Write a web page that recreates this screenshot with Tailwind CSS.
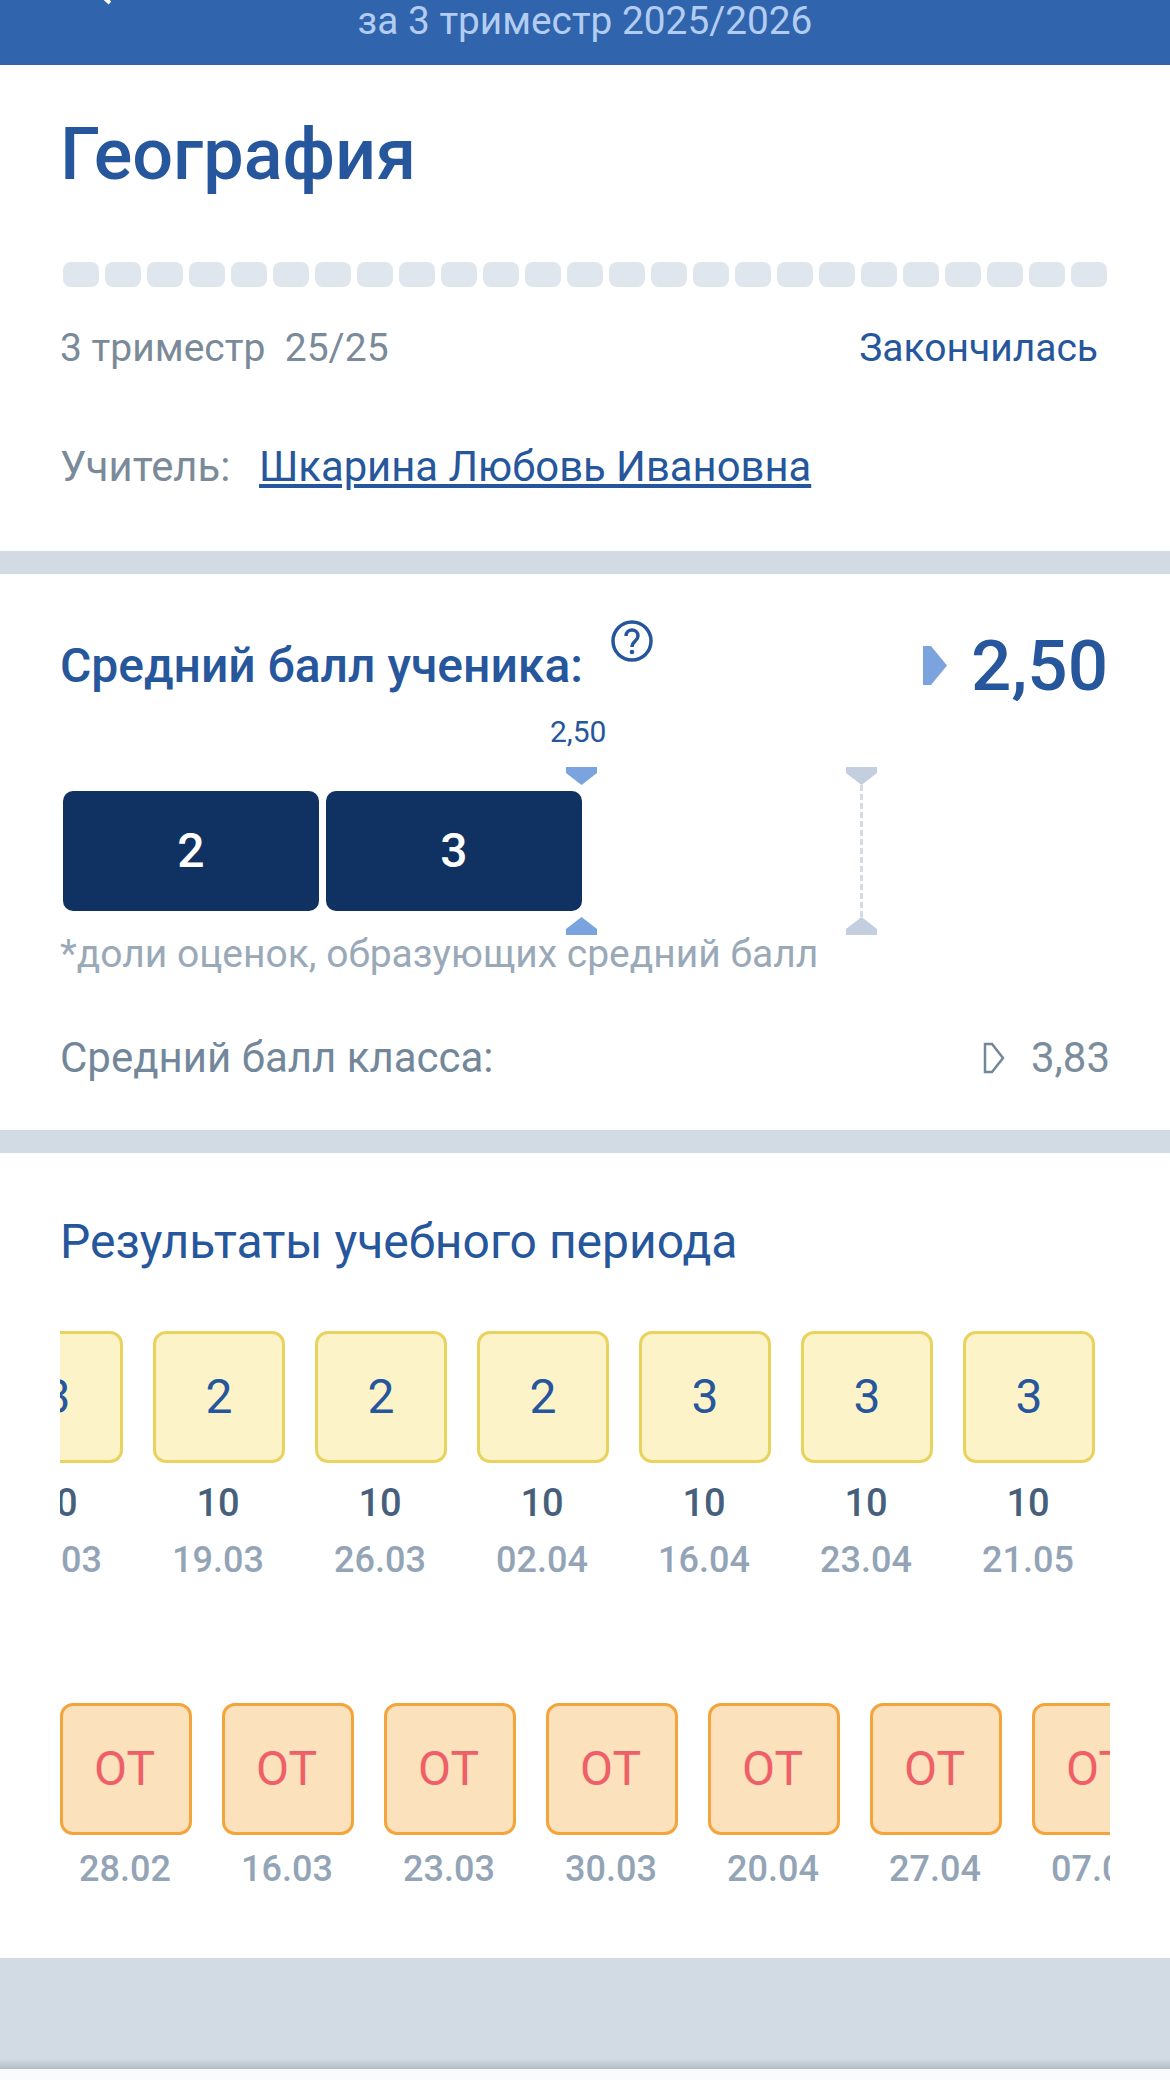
<!DOCTYPE html>
<html lang="ru">
<head>
  <meta charset="UTF-8"/>
  <meta name="viewport" content="width=device-width, initial-scale=1.0"/>
  <title>География</title>
  <script src="https://cdn.jsdelivr.net/npm/@tailwindcss/browser@4"></script>
</head>
<body class="bg-white font-['Roboto',sans-serif] w-[1170px] h-[2080px] overflow-hidden">

  <!-- Header, scrolled so only the subtitle shows -->
  <header class="relative h-[65px] bg-[#3064ac] overflow-hidden flex justify-center">
    <svg class="absolute left-[96px] top-0" width="20" height="6" viewBox="0 0 20 6"><path d="M4 -6 L14 3" stroke="#fff" stroke-width="4" fill="none"/></svg>
    <p class="text-[38.800px] leading-[42px] text-[#b3cdf2]">за 3 триместр 2025/2026</p>
  </header>

  <!-- Subject -->
  <section class="h-[486px] px-[60px] pt-[49px]">
    <h1 class="text-[72px] leading-[82px] font-medium text-[#26569c]">География</h1>
    <div class="flex gap-[6px] ml-[3px] mt-[66px]">
      <span class="w-[36px] h-[25px] rounded-[8px] bg-[#e0e6ed]"></span><span class="w-[36px] h-[25px] rounded-[8px] bg-[#e0e6ed]"></span><span class="w-[36px] h-[25px] rounded-[8px] bg-[#e0e6ed]"></span><span class="w-[36px] h-[25px] rounded-[8px] bg-[#e0e6ed]"></span><span class="w-[36px] h-[25px] rounded-[8px] bg-[#e0e6ed]"></span>
      <span class="w-[36px] h-[25px] rounded-[8px] bg-[#e0e6ed]"></span><span class="w-[36px] h-[25px] rounded-[8px] bg-[#e0e6ed]"></span><span class="w-[36px] h-[25px] rounded-[8px] bg-[#e0e6ed]"></span><span class="w-[36px] h-[25px] rounded-[8px] bg-[#e0e6ed]"></span><span class="w-[36px] h-[25px] rounded-[8px] bg-[#e0e6ed]"></span>
      <span class="w-[36px] h-[25px] rounded-[8px] bg-[#e0e6ed]"></span><span class="w-[36px] h-[25px] rounded-[8px] bg-[#e0e6ed]"></span><span class="w-[36px] h-[25px] rounded-[8px] bg-[#e0e6ed]"></span><span class="w-[36px] h-[25px] rounded-[8px] bg-[#e0e6ed]"></span><span class="w-[36px] h-[25px] rounded-[8px] bg-[#e0e6ed]"></span>
      <span class="w-[36px] h-[25px] rounded-[8px] bg-[#e0e6ed]"></span><span class="w-[36px] h-[25px] rounded-[8px] bg-[#e0e6ed]"></span><span class="w-[36px] h-[25px] rounded-[8px] bg-[#e0e6ed]"></span><span class="w-[36px] h-[25px] rounded-[8px] bg-[#e0e6ed]"></span><span class="w-[36px] h-[25px] rounded-[8px] bg-[#e0e6ed]"></span>
      <span class="w-[36px] h-[25px] rounded-[8px] bg-[#e0e6ed]"></span><span class="w-[36px] h-[25px] rounded-[8px] bg-[#e0e6ed]"></span><span class="w-[36px] h-[25px] rounded-[8px] bg-[#e0e6ed]"></span><span class="w-[36px] h-[25px] rounded-[8px] bg-[#e0e6ed]"></span><span class="w-[36px] h-[25px] rounded-[8px] bg-[#e0e6ed]"></span>
    </div>
    <div class="flex justify-between mt-[39px] pr-[12px] text-[39px] leading-[44px]">
      <p class="text-[#7b8a99] whitespace-pre">3 триместр  25/25</p>
      <p class="text-[#26569c]">Закончилась</p>
    </div>
    <div class="flex mt-[74px] text-[41.800px] leading-[46px]">
      <span class="text-[#7b8a99] w-[199px]">Учитель:</span>
      <a class="text-[#26569c] underline">Шкарина Любовь Ивановна</a>
    </div>
  </section>

  <div class="h-[23px] bg-[#d2dbe4]"></div>

  <!-- Average -->
  <section class="h-[556px] px-[60px]">
    <div class="flex justify-between h-[145px] pr-[2px]">
      <div class="flex">
        <h2 class="mt-[67px] text-[48px] leading-[50px] font-medium text-[#26569c]">Средний балл ученика:</h2>
        <svg class="mt-[46px] ml-[28px]" width="42" height="42" viewBox="0 0 42 42">
          <circle cx="21" cy="21" r="19" fill="none" stroke="#26569c" stroke-width="3.500"/>
          <path d="M15 16 C15 8 27 8 27 16 C27 21 21 21 21 27" fill="none" stroke="#26569c" stroke-width="3.500"/>
          <circle cx="21" cy="32" r="2.300" fill="#26569c"/>
        </svg>
      </div>
      <div class="flex">
        <svg class="mt-[72px]" width="24" height="39" viewBox="0 0 24 39"><path d="M0 0 H8 L24 19.500 L8 39 H0 Z" fill="#7ba3dd"/></svg>
        <p class="mt-[49px] ml-[24px] text-[71px] leading-[86px] font-medium text-[#26569c]">2,50</p>
      </div>
    </div>

    <div class="relative pt-[72px] h-[192px]">
      <!-- markers over the bar -->
      <span class="absolute left-[490px] top-[-5px] text-[30px] leading-[35px] text-[#26569c]">2,50</span>
      <svg class="absolute left-[506px] top-[48px]" width="31" height="18" viewBox="0 0 31 18"><path d="M0 0 H31 V6 L15.500 18 L0 6 Z" fill="#7ba3dd"/></svg>
      <svg class="absolute left-[506px] top-[198px]" width="31" height="18" viewBox="0 0 31 18"><path d="M0 18 H31 V12 L15.500 0 L0 12 Z" fill="#7ba3dd"/></svg>
      <svg class="absolute left-[786px] top-[48px]" width="31" height="18" viewBox="0 0 31 18"><path d="M0 0 H31 V6 L15.500 18 L0 6 Z" fill="#c3cfde"/></svg>
      <svg class="absolute left-[786px] top-[198px]" width="31" height="18" viewBox="0 0 31 18"><path d="M0 18 H31 V12 L15.500 0 L0 12 Z" fill="#c3cfde"/></svg>
      <span class="absolute left-[800px] top-[66px] h-[132px] border-l-[3px] border-dashed border-[#d5dbe3]"></span>
      <div class="flex gap-[7px] ml-[3px] text-[48px] font-medium text-white">
        <div class="w-[256px] h-[120px] rounded-[10px] bg-[#0f3262] flex items-center justify-center">2</div>
        <div class="w-[256px] h-[120px] rounded-[10px] bg-[#0f3262] flex items-center justify-center">3</div>
      </div>
    </div>

    <p class="mt-[21px] text-[39px] leading-[44px] text-[#9aa9b8]">*доли оценок, образующих средний балл</p>

    <div class="flex justify-between items-center mt-[59px] text-[42px] leading-[45px] text-[#73879a]">
      <span>Средний балл класса:</span>
      <span class="flex items-center text-[#7b8c9d]">
        <svg class="mr-[26px]" width="22" height="32" viewBox="0 0 22 32"><path d="M2 2 H9 L20 16 L9 30 H2 Z" fill="none" stroke="#73879a" stroke-width="2.500"/></svg>
        3,83
      </span>
    </div>
  </section>

  <div class="h-[23px] bg-[#d2dbe4]"></div>

  <!-- Results -->
  <section class="h-[805px] px-[60px] pt-[63px]">
    <h2 class="text-[48px] leading-[52px] text-[#26569c]">Результаты учебного периода</h2>

    <div class="mt-[63px] h-[251px] overflow-hidden w-[1050px]">
      <div class="flex gap-[30px] ml-[-69px]">
        <div class="w-[132px] shrink-0 flex flex-col items-center"><div class="w-[132px] h-[132px] rounded-[13px] border-[3px] border-[#e8d35f] bg-[#fdf3c9] flex items-center justify-center text-[48px] text-[#26569c]">3</div><p class="mt-[18px] ml-[-2px] text-[38px] leading-[44px] font-medium text-[#46607b]">10</p><p class="mt-[14px] ml-[-2px] text-[36px] leading-[42px] font-medium text-[#93a4b6]">12.03</p></div>
        <div class="w-[132px] shrink-0 flex flex-col items-center"><div class="w-[132px] h-[132px] rounded-[13px] border-[3px] border-[#e8d35f] bg-[#fdf3c9] flex items-center justify-center text-[48px] text-[#26569c]">2</div><p class="mt-[18px] ml-[-2px] text-[38px] leading-[44px] font-medium text-[#46607b]">10</p><p class="mt-[14px] ml-[-2px] text-[36px] leading-[42px] font-medium text-[#93a4b6]">19.03</p></div>
        <div class="w-[132px] shrink-0 flex flex-col items-center"><div class="w-[132px] h-[132px] rounded-[13px] border-[3px] border-[#e8d35f] bg-[#fdf3c9] flex items-center justify-center text-[48px] text-[#26569c]">2</div><p class="mt-[18px] ml-[-2px] text-[38px] leading-[44px] font-medium text-[#46607b]">10</p><p class="mt-[14px] ml-[-2px] text-[36px] leading-[42px] font-medium text-[#93a4b6]">26.03</p></div>
        <div class="w-[132px] shrink-0 flex flex-col items-center"><div class="w-[132px] h-[132px] rounded-[13px] border-[3px] border-[#e8d35f] bg-[#fdf3c9] flex items-center justify-center text-[48px] text-[#26569c]">2</div><p class="mt-[18px] ml-[-2px] text-[38px] leading-[44px] font-medium text-[#46607b]">10</p><p class="mt-[14px] ml-[-2px] text-[36px] leading-[42px] font-medium text-[#93a4b6]">02.04</p></div>
        <div class="w-[132px] shrink-0 flex flex-col items-center"><div class="w-[132px] h-[132px] rounded-[13px] border-[3px] border-[#e8d35f] bg-[#fdf3c9] flex items-center justify-center text-[48px] text-[#26569c]">3</div><p class="mt-[18px] ml-[-2px] text-[38px] leading-[44px] font-medium text-[#46607b]">10</p><p class="mt-[14px] ml-[-2px] text-[36px] leading-[42px] font-medium text-[#93a4b6]">16.04</p></div>
        <div class="w-[132px] shrink-0 flex flex-col items-center"><div class="w-[132px] h-[132px] rounded-[13px] border-[3px] border-[#e8d35f] bg-[#fdf3c9] flex items-center justify-center text-[48px] text-[#26569c]">3</div><p class="mt-[18px] ml-[-2px] text-[38px] leading-[44px] font-medium text-[#46607b]">10</p><p class="mt-[14px] ml-[-2px] text-[36px] leading-[42px] font-medium text-[#93a4b6]">23.04</p></div>
        <div class="w-[132px] shrink-0 flex flex-col items-center"><div class="w-[132px] h-[132px] rounded-[13px] border-[3px] border-[#e8d35f] bg-[#fdf3c9] flex items-center justify-center text-[48px] text-[#26569c]">3</div><p class="mt-[18px] ml-[-2px] text-[38px] leading-[44px] font-medium text-[#46607b]">10</p><p class="mt-[14px] ml-[-2px] text-[36px] leading-[42px] font-medium text-[#93a4b6]">21.05</p></div>
      </div>
    </div>

    <div class="mt-[121px] overflow-hidden w-[1050px]">
      <div class="flex gap-[30px]">
        <div class="w-[132px] shrink-0 flex flex-col items-center"><div class="w-[132px] h-[132px] pr-[3px] rounded-[13px] border-[3px] border-[#f3a53c] bg-[#fce1bd] flex items-center justify-center text-[48px] text-[#ee5f67]">ОТ</div><p class="mt-[13px] ml-[-2px] text-[36px] leading-[42px] font-medium text-[#93a4b6]">28.02</p></div>
        <div class="w-[132px] shrink-0 flex flex-col items-center"><div class="w-[132px] h-[132px] pr-[3px] rounded-[13px] border-[3px] border-[#f3a53c] bg-[#fce1bd] flex items-center justify-center text-[48px] text-[#ee5f67]">ОТ</div><p class="mt-[13px] ml-[-2px] text-[36px] leading-[42px] font-medium text-[#93a4b6]">16.03</p></div>
        <div class="w-[132px] shrink-0 flex flex-col items-center"><div class="w-[132px] h-[132px] pr-[3px] rounded-[13px] border-[3px] border-[#f3a53c] bg-[#fce1bd] flex items-center justify-center text-[48px] text-[#ee5f67]">ОТ</div><p class="mt-[13px] ml-[-2px] text-[36px] leading-[42px] font-medium text-[#93a4b6]">23.03</p></div>
        <div class="w-[132px] shrink-0 flex flex-col items-center"><div class="w-[132px] h-[132px] pr-[3px] rounded-[13px] border-[3px] border-[#f3a53c] bg-[#fce1bd] flex items-center justify-center text-[48px] text-[#ee5f67]">ОТ</div><p class="mt-[13px] ml-[-2px] text-[36px] leading-[42px] font-medium text-[#93a4b6]">30.03</p></div>
        <div class="w-[132px] shrink-0 flex flex-col items-center"><div class="w-[132px] h-[132px] pr-[3px] rounded-[13px] border-[3px] border-[#f3a53c] bg-[#fce1bd] flex items-center justify-center text-[48px] text-[#ee5f67]">ОТ</div><p class="mt-[13px] ml-[-2px] text-[36px] leading-[42px] font-medium text-[#93a4b6]">20.04</p></div>
        <div class="w-[132px] shrink-0 flex flex-col items-center"><div class="w-[132px] h-[132px] pr-[3px] rounded-[13px] border-[3px] border-[#f3a53c] bg-[#fce1bd] flex items-center justify-center text-[48px] text-[#ee5f67]">ОТ</div><p class="mt-[13px] ml-[-2px] text-[36px] leading-[42px] font-medium text-[#93a4b6]">27.04</p></div>
        <div class="w-[132px] shrink-0 flex flex-col items-center"><div class="w-[132px] h-[132px] pr-[3px] rounded-[13px] border-[3px] border-[#f3a53c] bg-[#fce1bd] flex items-center justify-center text-[48px] text-[#ee5f67]">ОТ</div><p class="mt-[13px] ml-[-2px] text-[36px] leading-[42px] font-medium text-[#93a4b6]">07.05</p></div>
      </div>
    </div>
  </section>

  <!-- Bottom filler -->
  <div class="h-[111px] bg-[#d2dbe4] flex flex-col justify-end">
    <div class="h-[10px] bg-gradient-to-b from-[#d2dbe4] to-[#b4bdc6]"></div>
  </div>
  <div class="h-[11px] bg-[#fafbfc]"></div>
</body>
</html>
